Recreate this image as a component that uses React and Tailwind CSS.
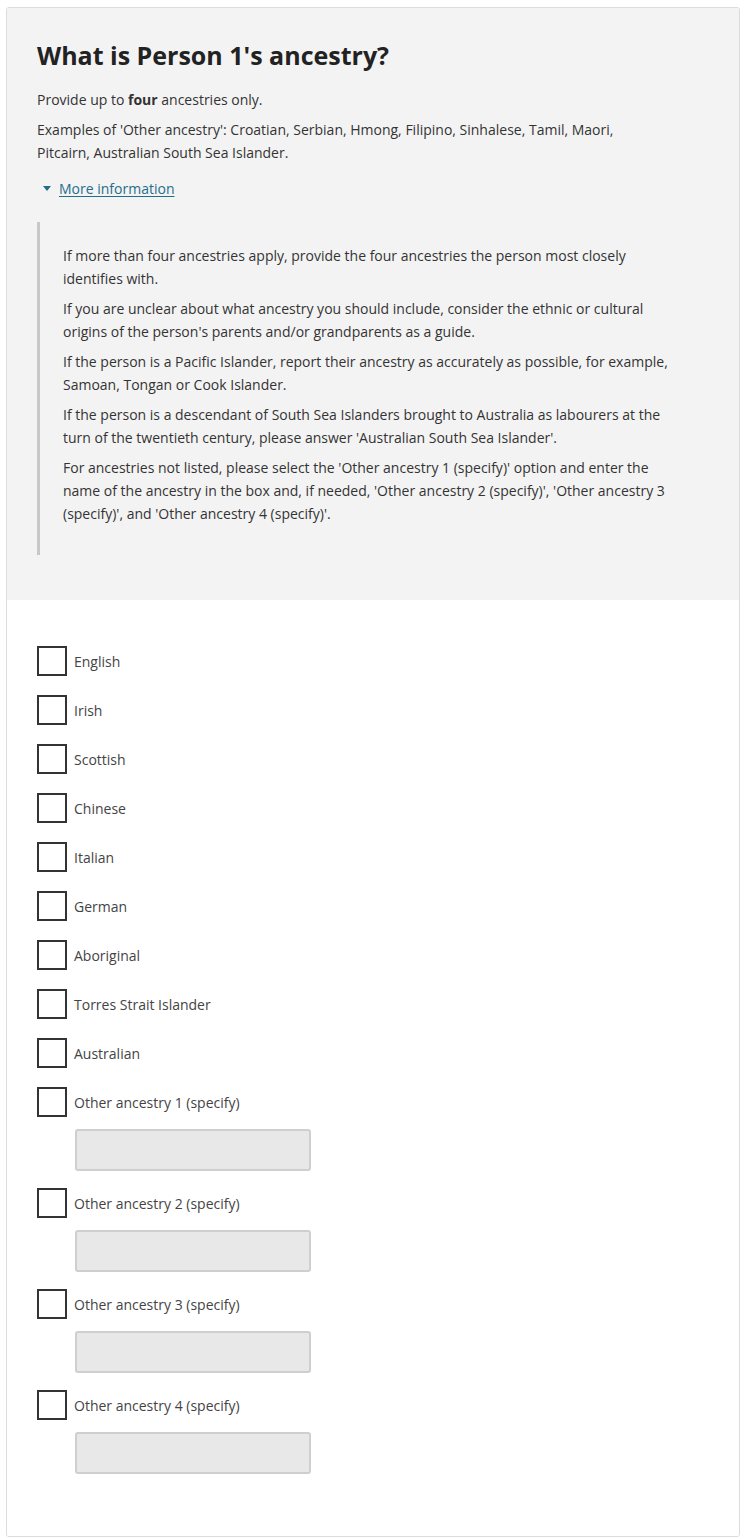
import React from "react";

const OPTIONS = [
  "English",
  "Irish",
  "Scottish",
  "Chinese",
  "Italian",
  "German",
  "Aboriginal",
  "Torres Strait Islander",
  "Australian",
];

const OTHERS = [
  "Other ancestry 1 (specify)",
  "Other ancestry 2 (specify)",
  "Other ancestry 3 (specify)",
  "Other ancestry 4 (specify)",
];

const font = { fontFamily: '"Open Sans", "Noto Sans", Arial, sans-serif' };

function Box({ label }) {
  return (
    <label className="flex items-center h-[30px] cursor-pointer">
      <span className="w-[30px] h-[30px] border-2 border-[#333] bg-white shrink-0" />
      <span className="ml-[7px] text-[14px] text-[#444]">{label}</span>
    </label>
  );
}

export default function App() {
  return (
    <div className="min-h-screen bg-white pt-[7px] px-[6px] text-[#333]" style={font}>
      <div className="w-[734px] border border-[#dcdcdc] rounded-[3px] overflow-hidden">
        {/* Question header */}
        <div className="bg-[#f3f3f3] h-[592px] pl-[30px] pr-[40px] pt-[31px]">
          <h1 className="text-[25px] leading-[32px] font-bold text-[#222]">What is Person 1's ancestry?</h1>
          <p className="mt-[17px] text-[14px] leading-[23px]">
            Provide up to <b>four</b> ancestries only.
          </p>
          <p className="mt-[7px] max-w-[600px] text-[14px] leading-[23px]">
            Examples of 'Other ancestry': Croatian, Serbian, Hmong, Filipino, Sinhalese, Tamil, Maori, Pitcairn, Australian South Sea Islander.
          </p>
          <div className="mt-[13px] flex items-center h-[23px] text-[14px]">
            <svg width="8" height="6" viewBox="0 0 8 6" className="ml-[6px]">
              <path d="M0 0 L8 0 L4 5 Z" fill="#1f6f8b" />
            </svg>
            <a href="#" className="ml-[8px] text-[#1f6f8b] underline underline-offset-2">More information</a>
          </div>
          <div className="mt-[22px] border-l-[3px] border-[#c8c8c8] pl-[23px] pt-[22px] pb-[30px] text-[14px] leading-[23px] text-[#333] pr-[20px]">
            <p>If more than four ancestries apply, provide the four ancestries the person most closely identifies with.</p>
            <p className="mt-[7px]">If you are unclear about what ancestry you should include, consider the ethnic or cultural origins of the person's parents and/or grandparents as a guide.</p>
            <p className="mt-[7px]">If the person is a Pacific Islander, report their ancestry as accurately as possible, for example, Samoan, Tongan or Cook Islander.</p>
            <p className="mt-[7px]">If the person is a descendant of South Sea Islanders brought to Australia as labourers at the turn of the twentieth century, please answer 'Australian South Sea Islander'.</p>
            <p className="mt-[7px]">For ancestries not listed, please select the 'Other ancestry 1 (specify)' option and enter the name of the ancestry in the box and, if needed, 'Other ancestry 2 (specify)', 'Other ancestry 3 (specify)', and 'Other ancestry 4 (specify)'.</p>
          </div>
        </div>

        {/* Answers */}
        <div className="bg-white pl-[30px] pt-[46px] pb-[62px] flex flex-col">
          {OPTIONS.map((o) => (
            <div key={o} className="mb-[19px]">
              <Box label={o} />
            </div>
          ))}
          {OTHERS.map((o, i) => (
            <div key={o} className={i < OTHERS.length - 1 ? "mb-[17px]" : ""}>
              <Box label={o} />
              <input
                type="text"
                className="block mt-[12px] ml-[38px] w-[236px] h-[42px] bg-[#e8e8e8] border-2 border-[#cfcfcf] rounded-[3px]"
              />
            </div>
          ))}
        </div>
      </div>
    </div>
  );
}
